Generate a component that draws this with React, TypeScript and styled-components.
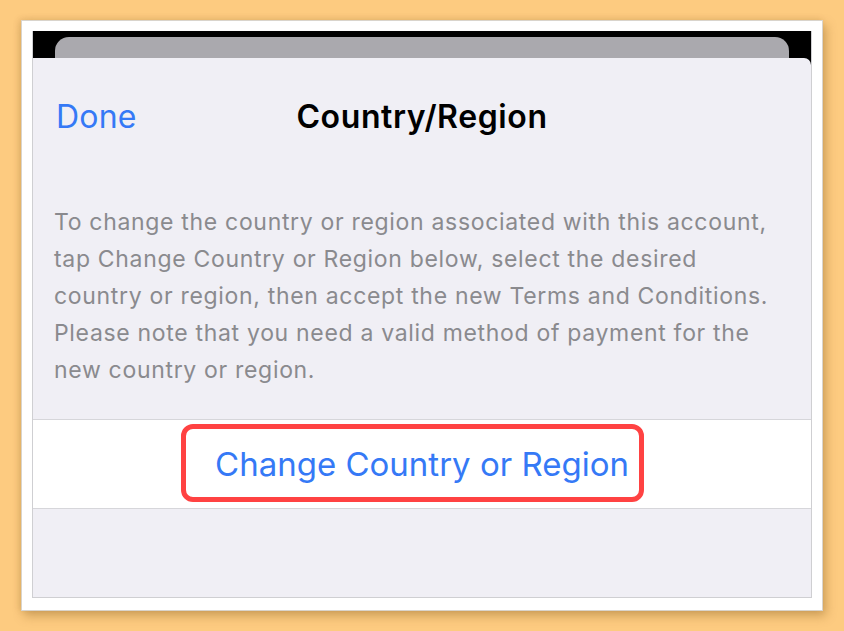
import React from 'react';
import styled, { createGlobalStyle } from 'styled-components';

const GlobalStyle = createGlobalStyle`
  html, body {
    margin: 0;
    padding: 0;
    background: #fdcb80;
  }
  body {
    font-family: Inter, "Noto Sans", sans-serif;
    -webkit-font-smoothing: antialiased;
  }
`;

const Page = styled.div`
  width: 844px;
  height: 631px;
  box-sizing: border-box;
  padding: 20px 21px 20px 21px;
  background: #fdcb80;
`;

const Frame = styled.div`
  box-sizing: border-box;
  width: 802px;
  height: 591px;
  padding: 10px 10px 12px 10px;
  background: #ffffff;
  border: 1px solid #d9d4cc;
  box-shadow: 3px 5px 10px rgba(120, 80, 20, 0.35), -2px -1px 6px rgba(120, 80, 20, 0.15);
`;

const Screen = styled.div`
  box-sizing: border-box;
  height: 100%;
  display: flex;
  flex-direction: column;
  background: #000;
  border: 1px solid #cfcfd2;
  border-top: none;
  overflow: hidden;
`;

const BackCardStrip = styled.div`
  padding: 6px 22px 0;
`;

const BackCard = styled.div`
  height: 21px;
  background: #aaa9ae;
  border-radius: 14px 14px 0 0;
`;

const Sheet = styled.div`
  flex: 1;
  display: flex;
  flex-direction: column;
  background: #f0eff5;
  border-top-right-radius: 7px;
`;

const Header = styled.div`
  position: relative;
  height: 116px;
  display: flex;
  align-items: center;
  justify-content: center;
`;

const DoneButton = styled.span`
  position: absolute;
  left: 23px;
  top: 50%;
  transform: translateY(-50%);
  font-size: 32px;
  letter-spacing: 0.2px;
  color: #3579f6;
`;

const Title = styled.h1`
  margin: 0;
  font-size: 32px;
  font-weight: 600;
  color: #000;
  letter-spacing: 0.6px;
`;

const Description = styled.p`
  margin: 30px 0 0;
  padding: 0 21px;
  font-size: 23px;
  line-height: 37px;
  color: #8a8a8e;
  letter-spacing: 0.68px;
  white-space: nowrap;
`;

const ActionRow = styled.div`
  margin-top: 30px;
  height: 88px;
  display: flex;
  align-items: center;
  justify-content: center;
  background: #fff;
  border-top: 1px solid #d6d6da;
  border-bottom: 1px solid #d6d6da;
`;

const ActionLabel = styled.span`
  position: relative;
  font-size: 33px;
  color: #3579f6;

  &::before {
    content: '';
    position: absolute;
    left: -34px;
    right: -15px;
    top: -20px;
    bottom: -18px;
    border: 5px solid #ff4242;
    border-radius: 12px;
  }
`;

const lines = [
  'To change the country or region associated with this account,',
  'tap Change Country or Region below, select the desired',
  'country or region, then accept the new Terms and Conditions.',
  'Please note that you need a valid method of payment for the',
  'new country or region.',
];

export default function App() {
  return (
    <>
      <GlobalStyle />
      <Page>
        <Frame>
          <Screen>
            <BackCardStrip>
              <BackCard />
            </BackCardStrip>
            <Sheet>
              <Header>
                <DoneButton>Done</DoneButton>
                <Title>Country/Region</Title>
              </Header>
              <Description>
                {lines.map((line, i) => (
                  <React.Fragment key={i}>
                    {line}
                    {i < lines.length - 1 && <br />}
                  </React.Fragment>
                ))}
              </Description>
              <ActionRow>
                <ActionLabel>Change Country or Region</ActionLabel>
              </ActionRow>
            </Sheet>
          </Screen>
        </Frame>
      </Page>
    </>
  );
}
